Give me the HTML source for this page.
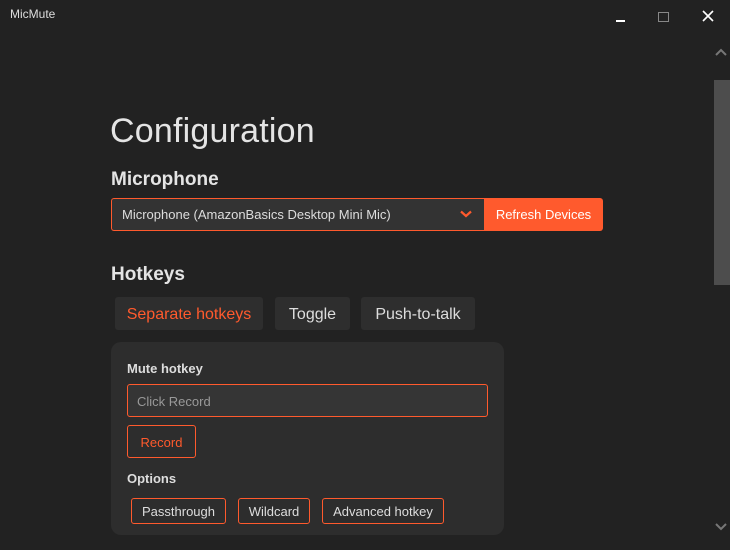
<!DOCTYPE html>
<html><head><meta charset="utf-8">
<style>
*{box-sizing:border-box;margin:0;padding:0}
body{width:730px;height:550px;background:#222222;font-family:"Liberation Sans",sans-serif;color:#e2e2e2;position:relative;overflow:hidden}
.abs{position:absolute}
.title{left:10px;top:7px;font-size:12px;color:#ddd}
h1{position:absolute;left:110px;top:112px;font-size:34px;font-weight:normal;color:#e4e4e4;letter-spacing:0.2px}
.h2{position:absolute;left:111px;font-size:19px;font-weight:bold;color:#e4e4e4}
.sel{left:111px;top:198px;width:374px;height:33px;border:1px solid #ff5a2d;border-right:none;border-radius:3px 0 0 3px;background:#333;font-size:13px;line-height:32px;padding-left:10px;color:#ddd}
.refresh{left:484px;top:198px;width:119px;height:33px;background:#ff5a2d;border-radius:0 3px 3px 0;color:#fff;font-size:13px;line-height:34px;text-align:center}
.tab{top:297px;height:33px;background:#2e2e2e;border-radius:3px;font-size:16px;line-height:35px;text-align:center;color:#ddd}
.panel{left:111px;top:342px;width:393px;height:193px;background:#2d2d2d;border-radius:10px}
.lbl{font-size:13px;font-weight:bold;color:#ddd}
.inp{left:127px;top:384px;width:361px;height:33px;border:1px solid #ff5a2d;border-radius:3px;background:#353535;color:#999;font-size:13px;line-height:33px;padding-left:9px}
.ob{border:1px solid #ff5a2d;border-radius:3px;color:#ddd;font-size:13px;text-align:center}
</style></head><body>
<div class="abs title">MicMute</div>
<div class="abs" style="left:616px;top:20px;width:9px;height:2px;background:#fff"></div>
<div class="abs" style="left:658px;top:12px;width:11px;height:10px;border:1px solid #888"></div>
<svg class="abs" style="left:702px;top:10px" width="12" height="12"><path d="M1 1L11 11M11 1L1 11" stroke="#fff" stroke-width="1.6"/></svg>
<svg class="abs" style="left:715px;top:47px" width="12" height="10"><path d="M1 8L6 3L11 8" stroke="#777" stroke-width="2" fill="none"/></svg>
<div class="abs" style="left:714px;top:80px;width:16px;height:205px;background:#4d4d4d"></div>
<svg class="abs" style="left:715px;top:522px" width="12" height="10"><path d="M1 2L6 7L11 2" stroke="#777" stroke-width="2" fill="none"/></svg>

<h1>Configuration</h1>
<div class="h2" style="top:169px">Microphone</div>
<div class="abs sel">Microphone (AmazonBasics Desktop Mini Mic)</div>
<svg class="abs" style="left:460px;top:210px" width="12" height="8"><path d="M1 1.5L6 6L11 1.5" stroke="#ff5a2d" stroke-width="2.2" fill="none"/></svg>
<div class="abs refresh">Refresh Devices</div>

<div class="h2" style="top:264px">Hotkeys</div>
<div class="abs tab" style="left:115px;width:148px;color:#ff5a2d">Separate hotkeys</div>
<div class="abs tab" style="left:275px;width:75px">Toggle</div>
<div class="abs tab" style="left:361px;width:114px">Push-to-talk</div>

<div class="abs panel"></div>
<div class="abs lbl" style="left:127px;top:361px">Mute hotkey</div>
<div class="abs inp">Click Record</div>
<div class="abs ob" style="left:127px;top:425px;width:69px;height:33px;line-height:33px;color:#ff5a2d">Record</div>
<div class="abs lbl" style="left:127px;top:471px">Options</div>
<div class="abs ob" style="left:131px;top:498px;width:95px;height:26px;line-height:25px">Passthrough</div>
<div class="abs ob" style="left:238px;top:498px;width:72px;height:26px;line-height:25px">Wildcard</div>
<div class="abs ob" style="left:322px;top:498px;width:122px;height:26px;line-height:25px">Advanced hotkey</div>
</body></html>
